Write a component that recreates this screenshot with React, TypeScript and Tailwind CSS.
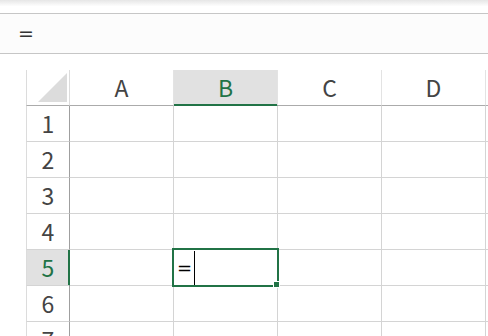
import React from "react";

const COLS = ["A", "B", "C", "D", "E"];
const ROWS = [1, 2, 3, 4, 5, 6, 7];
const SEL_COL = "B";
const SEL_ROW = 5;

export default function App() {
  return (
    <div
      className="w-[488px] h-[336px] overflow-hidden bg-white text-[#444]"
      style={{ fontFamily: '"Noto Sans CJK JP", "Noto Sans", sans-serif' }}
    >
      {/* ribbon shadow */}
      <div className="h-[13px] bg-gradient-to-b from-[#e6e6e6] via-white to-white" />

      {/* formula bar */}
      <div className="h-[41px] border-y border-[#c6c6c6] bg-[#fcfcfc] flex items-center pl-[18px]">
        <span className="font-['DejaVu_Sans',sans-serif] text-[19px] leading-none text-[#333]">=</span>
      </div>

      <div className="h-[16px]" />

      {/* sheet */}
      <div className="pl-[26px]">
        {/* column headers */}
        <div className="flex h-[36px]">
          <div className="w-[44px] shrink-0 border-l border-r border-b border-l-[#dcdcdc] border-r-[#dcdcdc] border-b-[#ababab] flex items-end justify-end pr-[2px] pb-[3px]">
            <svg width="29" height="29" viewBox="0 0 29 29">
              <polygon points="29,0 29,29 0,29" fill="#dcdcdc" />
            </svg>
          </div>
          {COLS.map((c) => {
            const sel = c === SEL_COL;
            return (
              <div
                key={c}
                className={
                  "w-[104px] shrink-0 border-r border-r-[#e3e3e3] border-b flex items-center justify-center text-[23px] " +
                  (sel
                    ? "bg-[#e1e1e1] border-b-[#217346] shadow-[inset_0_-1px_0_#217346] text-[#217346]"
                    : "border-b-[#ababab]")
                }
              >
                {c === "E" ? "" : c}
              </div>
            );
          })}
        </div>

        {/* rows */}
        {ROWS.map((r) => {
          const selRow = r === SEL_ROW;
          return (
            <div key={r} className="flex h-[36px]">
              <div
                className={
                  "w-[44px] shrink-0 border-l border-l-[#dcdcdc] border-r border-b border-b-[#d4d4d4] flex items-center justify-center text-[23px] " +
                  (selRow
                    ? "bg-[#e1e1e1] border-r-[#217346] shadow-[inset_-1px_0_0_#217346] text-[#217346]"
                    : "border-r-[#9f9f9f]")
                }
              >
                {r}
              </div>
              {COLS.map((c) => {
                const sel = selRow && c === SEL_COL;
                return (
                  <div
                    key={c}
                    className="relative w-[104px] shrink-0 border-r border-b border-[#d4d4d4]"
                  >
                    {sel && (
                      <div className="absolute -left-[2px] -top-[2px] w-[107px] h-[39px] border-2 border-[#217346] z-10">
                        <div className="flex items-center h-full pl-[3px]">
                          <span className="font-['DejaVu_Sans',sans-serif] text-[18px] leading-none text-black">=</span>
                          <span className="ml-[2px] w-px h-[34px] bg-black" />
                        </div>
                        <div className="absolute -right-[3px] -bottom-[3px] w-[7px] h-[7px] bg-[#217346] border border-white" />
                      </div>
                    )}
                  </div>
                );
              })}
            </div>
          );
        })}
      </div>
    </div>
  );
}
